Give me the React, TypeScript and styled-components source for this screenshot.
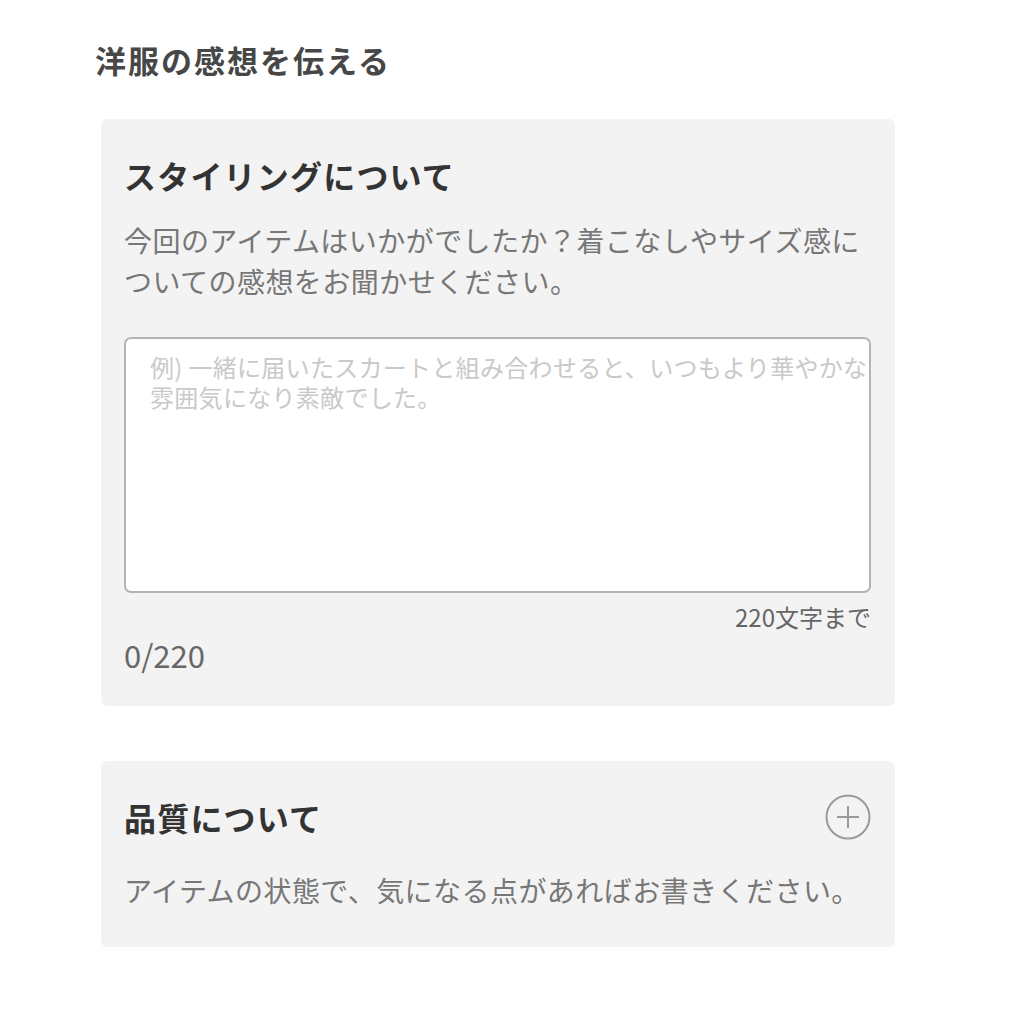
import styled, { createGlobalStyle } from "styled-components";

const GlobalStyle = createGlobalStyle`
  body {
    margin: 0;
    background: #ffffff;
    font-family: "Noto Sans CJK JP", "Noto Sans", sans-serif;
  }
`;

const Page = styled.div`
  padding: 40px 0 60px 95px;
  width: 800px;
`;

const PageTitle = styled.h1`
  margin: 0;
  font-size: 31px;
  line-height: 40px;
  letter-spacing: 2px;
  font-weight: 700;
  color: #474747;
`;

const Card = styled.section<{ $top: number; $pb: number }>`
  margin: ${(p) => p.$top}px 0 0 6px;
  width: 794px;
  box-sizing: border-box;
  padding: 33px 24px ${(p) => p.$pb}px 23px;
  background: #f3f3f3;
  border-radius: 6px;
`;

const CardHeader = styled.div`
  display: flex;
  align-items: center;
  justify-content: space-between;
`;

const CardTitle = styled.h2`
  margin: 0;
  font-size: 32px;
  line-height: 46px;
  letter-spacing: 1.2px;
  font-weight: 700;
  color: #333333;
`;

const Description = styled.p<{ $mt: number }>`
  margin: ${(p) => p.$mt}px 0 0;
  font-size: 28px;
  line-height: 41px;
  letter-spacing: 0.45px;
  color: #777777;
`;

const TextArea = styled.textarea`
  display: block;
  margin-top: 35px;
  width: 747px;
  height: 256px;
  box-sizing: border-box;
  padding: 13px 0 0 24px;
  border: 2px solid #b4b4b4;
  border-radius: 7px;
  background: #ffffff;
  resize: none;
  overflow: hidden;
  font-family: "Noto Sans CJK JP", "Noto Sans", sans-serif;
  font-size: 24px;
  line-height: 30px;
  letter-spacing: 0.3px;
  color: #333;
  outline: none;

  &::placeholder {
    color: #c9c9c9;
  }
`;

const Limit = styled.div`
  margin-top: 9px;
  width: 747px;
  text-align: right;
  font-size: 24px;
  line-height: 30px;
  color: #666666;
`;

const Count = styled.div`
  margin-top: 3px;
  font-size: 31px;
  line-height: 40px;
  color: #666666;
`;

const ExpandButton = styled.button`
  display: flex;
  padding: 0;
  border: none;
  background: none;
  cursor: pointer;
`;

function PlusCircle() {
  return (
    <svg width="46" height="46" viewBox="0 0 46 46" fill="none">
      <circle cx="23" cy="23" r="21.5" stroke="#9a9a9a" strokeWidth="2" />
      <path d="M23 12v22M12 23h22" stroke="#9a9a9a" strokeWidth="2" />
    </svg>
  );
}

export default function App() {
  return (
    <>
      <GlobalStyle />
      <Page>
        <PageTitle>洋服の感想を伝える</PageTitle>

        <Card $top={39} $pb={31}>
          <CardTitle>スタイリングについて</CardTitle>
          <Description $mt={22}>
            今回のアイテムはいかがでしたか？着こなしやサイズ感についての感想をお聞かせください。
          </Description>
          <TextArea placeholder="例) 一緒に届いたスカートと組み合わせると、いつもより華やかな雰囲気になり素敵でした。" />
          <Limit>220文字まで</Limit>
          <Count>0/220</Count>
        </Card>

        <Card $top={55} $pb={36}>
          <CardHeader>
            <CardTitle>品質について</CardTitle>
            <ExpandButton aria-label="開く">
              <PlusCircle />
            </ExpandButton>
          </CardHeader>
          <Description $mt={30}>
            アイテムの状態で、気になる点があればお書きください。
          </Description>
        </Card>
      </Page>
    </>
  );
}
